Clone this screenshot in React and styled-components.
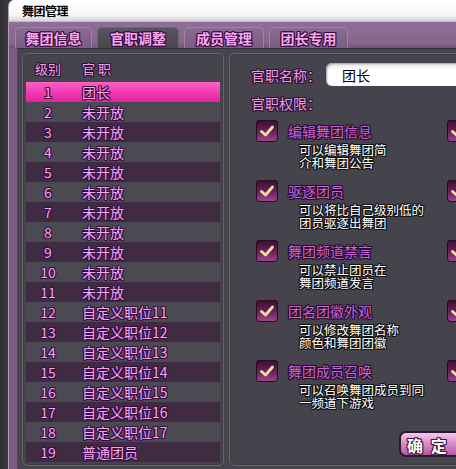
import styled, { createGlobalStyle } from "styled-components";

const GlobalStyle = createGlobalStyle`
  html, body {
    margin: 0;
    padding: 0;
    background: #3a3a3c;
    overflow: hidden;
  }
  body {
    font-family: "Noto Sans CJK SC", "Noto Sans", sans-serif;
  }
`;

const outline = (c) =>
  `-1px 0 ${c}, 1px 0 ${c}, 0 -1px ${c}, 0 1px ${c}, -1px -1px ${c}, 1px 1px ${c}, -1px 1px ${c}, 1px -1px ${c}`;

const Page = styled.div`
  display: flex;
  width: 456px;
  height: 469px;
  overflow: hidden;
`;

const Backdrop = styled.div`
  width: 8px;
  flex: none;
  background: linear-gradient(90deg, #2f2f31 0%, #3a3a3d 100%);
`;

const Window = styled.div`
  flex: 1;
  min-width: 0;
  display: flex;
  flex-direction: column;
  border-top-left-radius: 6px;
  overflow: hidden;
  background: #7c5c83;
  border-left: 1px solid #b79cbc;
`;

const TitleBar = styled.div`
  height: 21px;
  flex: none;
  display: flex;
  align-items: center;
  padding-left: 13px;
  background: linear-gradient(180deg, #ffffff 0%, #f6f6f6 70%, #d8d2da 100%);
  border-bottom: 1px solid #c8b8ca;
  font-size: 12px;
  font-weight: 700;
  color: #000;
  letter-spacing: -0.5px;
`;

const TabBar = styled.div`
  height: 26px;
  flex: none;
  display: flex;
  align-items: flex-end;
  gap: 5px;
  padding-left: 6px;
  background: linear-gradient(180deg, #8f6f96 0%, #86668d 80%, #6f5275 100%);
`;

const Tab = styled.div`
  width: ${(p) => p.$w}px;
  height: 20px;
  display: flex;
  align-items: center;
  justify-content: center;
  border: 1px solid ${(p) => (p.$active ? "#6d6773" : "#9d84a3")};
  border-bottom: none;
  border-radius: 5px 5px 0 0;
  background: ${(p) =>
    p.$active
      ? "linear-gradient(180deg, #5a5460 0%, #4a464f 100%)"
      : "linear-gradient(180deg, #8b6b92 0%, #7a5b81 100%)"};
  color: #f4a8f0;
  font-size: 14px;
  font-weight: 700;
  text-shadow: ${outline("#3a0c3c")};
`;

const Body = styled.div`
  flex: 1;
  display: flex;
  gap: 5px;
  margin-left: 8px;
  padding: 4px 0 0 4px;
  background: #46454d;
  border-top: 1px solid #3b2c3e;
  border-left: 1px solid #54425a;
`;

const Panel = styled.div`
  width: ${(p) => p.$w}px;
  height: 413px;
  flex: none;
  box-sizing: border-box;
  display: flex;
  flex-direction: column;
  border: 1px solid #6a6670;
  border-radius: 6px;
  background: #45444c;
  box-shadow: inset 0 0 0 1px #3c3b42;
`;

const ListPanel = styled(Panel)`
  padding: 0 3px;
`;

const ListHeader = styled.div`
  height: 28px;
  flex: none;
  display: flex;
  align-items: center;
  color: #e9a2ea;
  font-size: 13px;
  text-shadow: ${outline("#2e1232")};
`;

const Row = styled.div`
  height: 20px;
  flex: none;
  display: flex;
  align-items: center;
  background: ${(p) =>
    p.$selected
      ? "linear-gradient(180deg, #ff62c8 0%, #f23bb4 50%, #e0249e 100%)"
      : p.$odd
      ? "#3f2b42"
      : "#4a4a53"};
  color: #f3a6f2;
  font-size: 14px;
  text-shadow: ${outline("#3a0f3e")};
`;

const LevelCell = styled.div`
  width: 44px;
  text-align: center;
`;

const NameCell = styled.div`
  padding-left: 12px;
`;

const FormPanel = styled(Panel)`
  padding: 9px 0 0 21px;
  overflow: hidden;
`;

const FieldRow = styled.div`
  display: flex;
  align-items: center;
  height: 23px;
`;

const FieldLabel = styled.div`
  width: 75px;
  flex: none;
  white-space: nowrap;
  color: #e79ae8;
  font-size: 14px;
  line-height: 18px;
  text-shadow: ${outline("#2e0f32")};
  margin-top: ${(p) => p.$mt || 0}px;
`;

const NameInput = styled.div`
  width: 160px;
  height: 23px;
  flex: none;
  box-sizing: border-box;
  display: flex;
  align-items: center;
  padding-left: 16px;
  border-radius: 6px;
  background: linear-gradient(180deg, #e8e8e8 0%, #ffffff 30%, #ffffff 100%);
  box-shadow: inset 1px 1px 2px #9a9a9a;
  color: #000;
  font-size: 14px;
`;

const PermGrid = styled.div`
  display: grid;
  grid-template-columns: 191px 30px;
  row-gap: 12px;
  margin-top: 8px;
  padding-left: 5px;
`;

const Perm = styled.div`
  display: flex;
  flex-direction: column;
  height: 48px;
`;

const PermHead = styled.div`
  display: flex;
  align-items: center;
  gap: 10px;
  height: 22px;
  white-space: nowrap;
`;

const Check = styled.div`
  width: 22px;
  height: 22px;
  flex: none;
  display: flex;
  align-items: center;
  justify-content: center;
  border-radius: 4px;
  background: linear-gradient(180deg, #3c0e2e 0%, #6a2258 55%, #a24a96 100%);
  box-shadow: inset 0 0 0 1px #2a0a22;
`;

const PermTitle = styled.div`
  color: #c565d6;
  font-size: 14px;
  text-shadow: ${outline("#2a0a2e")};
`;

const PermDesc = styled.div`
  padding-left: 43px;
  padding-top: 1px;
  color: #ffffff;
  font-size: 12.5px;
  line-height: 13px;
  white-space: nowrap;
  text-shadow: ${outline("#111")};
`;

const Footer = styled.div`
  display: flex;
  margin-top: 23px;
  padding-left: 148px;
`;

const ConfirmButton = styled.button`
  width: 72px;
  height: 26px;
  flex: none;
  border: 2px solid #2a1a2c;
  border-radius: 7px;
  background: linear-gradient(180deg, #f7c6ef 0%, #d98fcf 45%, #b35aa8 100%);
  color: #fff;
  font-family: inherit;
  font-size: 16px;
  font-weight: 700;
  letter-spacing: 2px;
  padding: 0 0 0 6px;
  text-align: left;
  white-space: nowrap;
  text-shadow: ${outline("#3a1a3c")};
`;

const CheckMark = () => (
  <svg width="16" height="14" viewBox="0 0 16 14">
    <path
      d="M2.5 7.5 L6.5 11 L13.5 3"
      fill="none"
      stroke="#f3dfa2"
      strokeWidth="2.8"
      strokeLinecap="round"
      strokeLinejoin="round"
    />
  </svg>
);

const ranks = [
  "团长",
  ...Array(10).fill("未开放"),
  ...[11, 12, 13, 14, 15, 16, 17].map((n) => `自定义职位${n}`),
  "普通团员",
];

const perms = [
  ["编辑舞团信息", "可以编辑舞团简", "介和舞团公告"],
  ["驱逐团员", "可以将比自己级别低的", "团员驱逐出舞团"],
  ["舞团频道禁言", "可以禁止团员在", "舞团频道发言"],
  ["团名团徽外观", "可以修改舞团名称", "颜色和舞团团徽"],
  ["舞团成员召唤", "可以召唤舞团成员到同", "一频道下游戏"],
];

const tabs = [
  ["舞团信息", 75],
  ["官职调整", 80],
  ["成员管理", 78],
  ["团长专用", 77],
];

export default function App() {
  return (
    <>
      <GlobalStyle />
      <Page>
        <Backdrop />
        <Window>
          <TitleBar>舞团管理</TitleBar>
          <TabBar>
            {tabs.map(([label, w], i) => (
              <Tab key={label} $w={w} $active={i === 1}>
                {label}
              </Tab>
            ))}
          </TabBar>
          <Body>
            <ListPanel $w={202}>
              <ListHeader>
                <LevelCell>级别</LevelCell>
                <NameCell>官 职</NameCell>
              </ListHeader>
              {ranks.map((name, i) => (
                <Row key={i} $selected={i === 0} $odd={i % 2 === 0}>
                  <LevelCell>{i + 1}</LevelCell>
                  <NameCell>{name}</NameCell>
                </Row>
              ))}
            </ListPanel>
            <FormPanel $w={260}>
              <FieldRow>
                <FieldLabel>官职名称：</FieldLabel>
                <NameInput>团长</NameInput>
              </FieldRow>
              <FieldLabel $mt={8}>官职权限：</FieldLabel>
              <PermGrid>
                {perms.flatMap(([title, l1, l2]) => [
                  <Perm key={title}>
                    <PermHead>
                      <Check>
                        <CheckMark />
                      </Check>
                      <PermTitle>{title}</PermTitle>
                    </PermHead>
                    <PermDesc>
                      {l1}
                      <br />
                      {l2}
                    </PermDesc>
                  </Perm>,
                  <Perm key={title + "-2"}>
                    <Check>
                      <CheckMark />
                    </Check>
                  </Perm>,
                ])}
              </PermGrid>
              <Footer>
                <ConfirmButton>确 定</ConfirmButton>
              </Footer>
            </FormPanel>
          </Body>
        </Window>
      </Page>
    </>
  );
}
